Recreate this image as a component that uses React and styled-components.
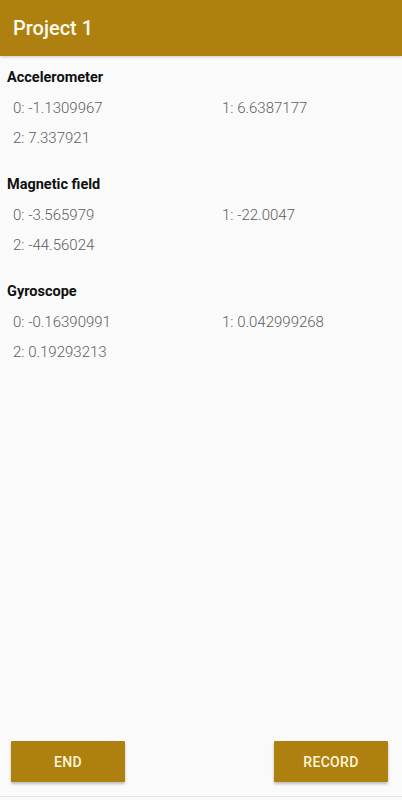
import React from "react";
import styled, { createGlobalStyle } from "styled-components";

const GlobalStyle = createGlobalStyle`
  html, body {
    margin: 0;
    padding: 0;
    background: #fafafa;
    font-family: Roboto, "Liberation Sans", sans-serif;
  }
`;

const Page = styled.div`
  height: 800px;
  display: flex;
  flex-direction: column;
  background-color: #fafafa;
`;

const Header = styled.header`
  height: 56px;
  flex-shrink: 0;
  display: flex;
  align-items: center;
  padding: 0 13px;
  background-color: #ad800f;
  color: #fffbee;
  font-size: 20px;
  font-weight: 500;
  box-shadow: 0 1px 3px rgba(0, 0, 0, 0.2);
`;

const Content = styled.main`
  flex: 1;
  padding: 12px 7px 0;
`;

const Section = styled.section`
  margin-bottom: 22px;
`;

const Title = styled.div`
  height: 20px;
  line-height: 20px;
  font-size: 14.5px;
  font-weight: 700;
  color: #111;
  margin-bottom: 5px;
`;

const Values = styled.div`
  display: grid;
  grid-template-columns: 209px 1fr;
  padding-left: 6px;
`;

const Value = styled.div`
  height: 30px;
  line-height: 30px;
  font-size: 15px;
  font-weight: 300;
  color: #5e5e5e;
`;

const Footer = styled.footer`
  display: flex;
  justify-content: space-between;
  padding: 0 14px 14px 11px;
  border-bottom: 1px solid #e6e6e6;
  margin-bottom: 3px;
`;

const Button = styled.button`
  width: 114px;
  height: 41px;
  border: none;
  border-radius: 1px;
  background-color: #ad800f;
  color: #fff7dc;
  font-family: Roboto, "Liberation Sans", sans-serif;
  font-size: 14px;
  font-weight: 500;
  letter-spacing: 0.3px;
  box-shadow: 0 2px 3px rgba(0, 0, 0, 0.25);
`;

const sensors = [
  { name: "Accelerometer", values: ["-1.1309967", "6.6387177", "7.337921"] },
  { name: "Magnetic field", values: ["-3.565979", "-22.0047", "-44.56024"] },
  { name: "Gyroscope", values: ["-0.16390991", "0.042999268", "0.19293213"] },
];

export default function App() {
  return (
    <Page>
      <GlobalStyle />
      <Header>Project 1</Header>
      <Content>
        {sensors.map((s) => (
          <Section key={s.name}>
            <Title>{s.name}</Title>
            <Values>
              {s.values.map((v, i) => (
                <Value key={i}>
                  {i}: {v}
                </Value>
              ))}
            </Values>
          </Section>
        ))}
      </Content>
      <Footer>
        <Button>END</Button>
        <Button>RECORD</Button>
      </Footer>
    </Page>
  );
}
